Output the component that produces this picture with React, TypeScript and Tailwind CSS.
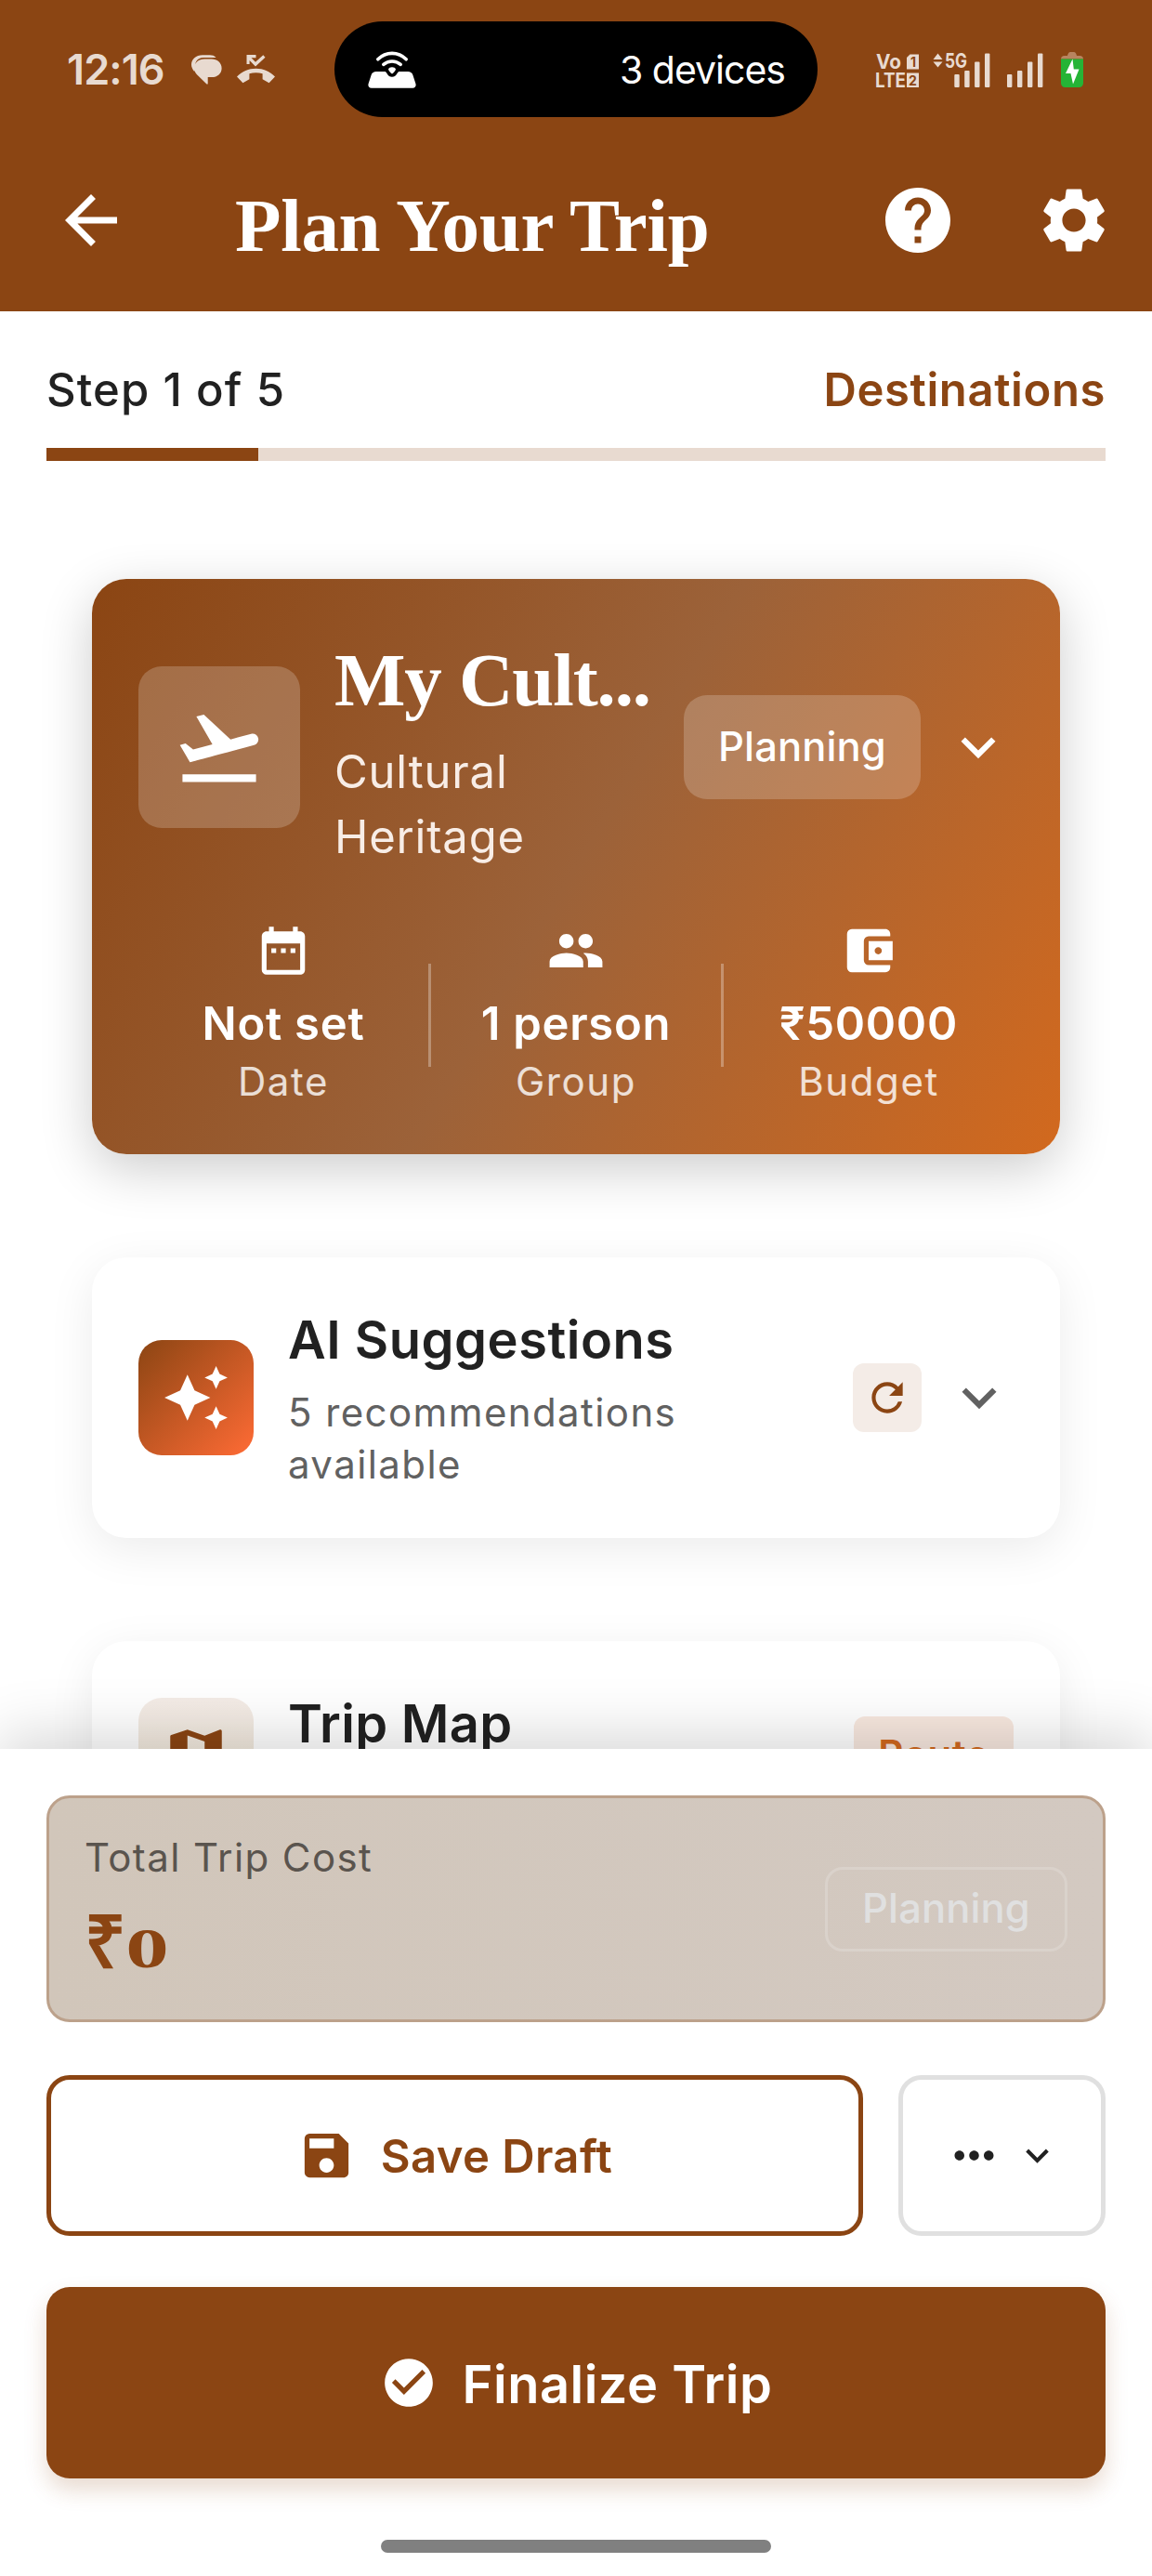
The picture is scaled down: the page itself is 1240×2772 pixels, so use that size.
import type { ReactNode } from "react";
import {
  MdAccountBalanceWallet,
  MdArrowBack,
  MdAutoAwesome,
  MdCheckCircle,
  MdDateRange,
  MdFlightTakeoff,
  MdHelp,
  MdKeyboardArrowDown,
  MdMap,
  MdMoreHoriz,
  MdPeople,
  MdRefresh,
  MdSave,
  MdSettings,
} from "react-icons/md";

function ChatBubbles() {
  return (
    <svg className="ml-[28px] h-[32px] w-[33px]" viewBox="0 0 33 32" fill="#E8DAD0">
      <path d="M4.6 14.5C2.8 8.6 6.4 2.9 13 2.9h13.6C24.8 1 22.6.3 20 .3h-8C5 .3 0 5 0 10.6c0 2.600 1.200 5.200 3.200 7.400z" />
      <path d="M14.200 4.600h7.400c6.300 0 11 4.200 11 9.800 0 5.600-4.600 9.700-10.600 9.700h-4.300V31.500h-1.200L6.200 21.600C4 19.400 3 17 3 14.300 3 8.600 7.800 4.600 14.200 4.600z" />
    </svg>
  );
}

function MissedCall() {
  return (
    <svg className="ml-[16px] h-[31px] w-[41px]" viewBox="0 0 41 31" fill="#E8DAD0">
      <path d="M10.500 0H20.500V3.200H15.500L20 7.800 28.300.3 30.500 2.800 20 12.600 13.600 6V10H10.500z" />
      <path d="M0 23.600C5.500 17.700 12.700 14.800 20.500 14.800S35.500 17.700 41 23.600L34.600 30.200 27.600 26.300V20.200C23 18.900 18 18.900 13.400 20.200V26.300L6.400 30.200z" />
    </svg>
  );
}

function Hotspot() {
  return (
    <svg className="h-[40px] w-[52px]" viewBox="0 0 52 40" fill="none">
      <path
        d="M9 22h9.500c1.800 0 2.600 5.800 7.500 5.800S31.700 22 33.500 22H43c2.500 0 4.600 1.300 5.400 3.700l3 9.300c.8 2.500-.6 4.700-3.200 4.700H3.800C1.200 39.700-.2 37.500.6 35l3-9.300C4.400 23.300 6.500 22 9 22z"
        fill="#fff"
      />
      <path d="M26 17.200c-2 0-3.400.8-4 2.200.6 2 2.200 3.800 4 5 1.800-1.200 3.400-3 4-5-.6-1.400-2-2.200-4-2.200z" fill="#fff" />
      <path d="M10.800 8.800C19.500.2 32.500.2 41.200 8.800M16.800 14.400c5.400-4.600 13-4.600 18.400 0" stroke="#fff" strokeWidth="3.600" strokeLinecap="round" />
    </svg>
  );
}

function NetworkStatus() {
  return (
    <svg
      className="ml-[63px] h-[40px] w-[224px] overflow-visible"
      viewBox="0 0 224 40"
      fill="#E8DAD0"
      fontFamily="Inter, sans-serif"
    >
      <text x="0" y="19" fontSize="21" fontWeight="700" textLength="27" lengthAdjust="spacingAndGlyphs">Vo</text>
      <text x="-1" y="38.500" fontSize="21" fontWeight="700" textLength="33" lengthAdjust="spacingAndGlyphs">LTE</text>
      <path d="M36.500 3.500H46V19.500H33V7z" />
      <path d="M33 23.500H46V39H33z" />
      <text x="37" y="16.500" fontSize="14" fontWeight="700" fill="#8B4513">1</text>
      <text x="35" y="36.500" fontSize="14" fontWeight="700" fill="#8B4513">2</text>
      <path d="M61.500 9 66.500 2.500 71.500 9zM61.500 11.500H71.500L66.500 17.500z" />
      <text x="74" y="17.500" fontSize="21.500" fontWeight="700" textLength="24" lengthAdjust="spacingAndGlyphs">5G</text>
      <rect x="84.300" y="25" width="5.400" height="14" rx="1" />
      <rect x="95.200" y="21" width="5.400" height="18" rx="1" />
      <rect x="106.100" y="11.500" width="5.400" height="27.500" rx="1" />
      <rect x="117" y="2.500" width="5.400" height="36.500" rx="1" />
      <rect x="141" y="25" width="5.400" height="14" rx="1" />
      <rect x="152" y="21" width="5.400" height="18" rx="1" />
      <rect x="163" y="11.500" width="5.400" height="27.500" rx="1" />
      <rect x="174" y="2.500" width="5.400" height="36.500" rx="1" />
      <path d="M199 8.500c0-2 1.500-3.500 3.500-3.500H206c.6-2.600 1.600-4 3-4h4c1.400 0 2.400 1.400 3 4h3.500c2 0 3.500 1.500 3.500 3.500z" fill="#B8845F" />
      <path d="M199 8.500H223V34.500c0 2.500-2 4.500-4.500 4.500h-15c-2.500 0-4.500-2-4.500-4.500z" fill="#25B436" />
      <path d="M211.500 8.500 204 24H209.500L212 35.500 218.500 19.500H212.800z" fill="#fff" />
    </svg>
  );
}

function Stat({ icon, value, label }: { icon: ReactNode; value: string; label: string }) {
  return (
    <div className="flex flex-1 flex-col items-center text-[62px] text-white">
      {icon}
      <span className="mt-[13px] text-[49px] leading-[70px] font-semibold tracking-[0.7px]">{value}</span>
      <span className="-mt-px text-[42px] leading-[56px] tracking-[1.6px] text-white/80">{label}</span>
    </div>
  );
}

function Header() {
  return (
    <header className="h-[335px] bg-[#8B4513]">
      <div className="flex h-[149px] items-center pl-[72px]">
        <span className="w-[106px] text-[45px] leading-[60px] font-semibold tracking-[-0.9px] whitespace-nowrap text-[#E8DAD0]">
          12:16
        </span>
        <ChatBubbles />
        <MissedCall />
        <div className="ml-[64px] flex h-[103px] w-[520px] items-center justify-between rounded-full bg-black pr-[35px] pl-[36px]">
          <Hotspot />
          <span className="text-[41px] leading-[60px] tracking-[-1px] whitespace-nowrap text-white">3 devices</span>
        </div>
        <NetworkStatus />
      </div>
      <div className="flex h-[176px] items-center pr-[42px] pl-[56px] text-[84px] text-white">
        <MdArrowBack />
        <h1 className="mt-[11px] ml-[113px] flex-1 font-['Liberation_Serif',serif] text-[81px] leading-[100px] font-bold tracking-[-0.300px] whitespace-nowrap">
          Plan Your Trip
        </h1>
        <MdHelp />
        <MdSettings className="ml-[84px]" />
      </div>
    </header>
  );
}

function Progress() {
  return (
    <section className="px-[50px] pt-[50px]">
      <div className="flex justify-between text-[49px] leading-[70px] text-[#212121]">
        <span className="font-medium tracking-[1.100px]">Step 1 of 5</span>
        <span className="font-semibold tracking-[0.600px] text-[#8B4513]">Destinations</span>
      </div>
      <div className="mt-[27px] h-[14px] bg-[#E8DAD0]">
        <div className="h-full w-1/5 bg-[#8B4513]" />
      </div>
    </section>
  );
}

function TripSummary() {
  return (
    <section className="mt-[127px] h-[619px] rounded-[37px] bg-[linear-gradient(120.740deg,#8B4513_0%,#9C6239_50%,#D2691E_100%)] p-[50px] shadow-[0_16px_56px_rgba(0,0,0,0.2)]">
      <div className="flex h-[262px] items-center text-white">
        <div className="flex size-[174px] items-center justify-center rounded-[25px] bg-white/20 text-[100px]">
          <MdFlightTakeoff />
        </div>
        <div className="ml-[37px] w-[376px]">
          <h2 className="font-['Liberation_Serif',serif] text-[81px] leading-[118px] font-bold tracking-[-1.100px] whitespace-nowrap">
            My Cult...
          </h2>
          <p className="mt-[5px] w-[260px] text-[49px] leading-[70px] tracking-[0.800px] text-[#F8EDE6]">Cultural Heritage</p>
        </div>
        <div className="flex h-[112px] w-[255px] items-center justify-center rounded-[25px] bg-white/20 text-[43.500px] font-medium tracking-[0.1px]">
          Planning
        </div>
        <MdKeyboardArrowDown className="ml-[25px] text-[74px]" />
      </div>
      <div className="mt-[57px] flex items-center">
        <Stat icon={<MdDateRange />} value="Not set" label="Date" />
        <div className="h-[111px] w-[3px] bg-white/30" />
        <Stat icon={<MdPeople />} value="1 person" label="Group" />
        <div className="h-[111px] w-[3px] bg-white/30" />
        <Stat icon={<MdAccountBalanceWallet />} value="₹50000" label="Budget" />
      </div>
    </section>
  );
}

function Suggestions() {
  return (
    <section className="mt-[111px] flex h-[302px] items-center rounded-[37px] bg-white p-[50px] shadow-[0_12px_50px_rgba(0,0,0,0.08)]">
      <div className="flex size-[124px] items-center justify-center rounded-[25px] bg-[linear-gradient(135deg,#8B4513,#FF6B35)] text-[74px] text-white">
        <MdAutoAwesome />
      </div>
      <div className="-mt-[2px] ml-[37px] flex-1">
        <h3 className="text-[56px] leading-[78px] font-semibold tracking-[0.5px] text-[#212121]">AI Suggestions</h3>
        <p className="mt-[11px] w-[480px] text-[42px] leading-[56px] tracking-[1.4px] text-[#616161]">
          5 recommendations available
        </p>
      </div>
      <div className="flex size-[74px] items-center justify-center rounded-[12px] bg-[#F4ECE7] text-[50px] text-[#8B4513]">
        <MdRefresh />
      </div>
      <MdKeyboardArrowDown className="ml-[25px] text-[74px] text-[#616161]" />
    </section>
  );
}

function TripMap() {
  return (
    <section className="mt-[111px] flex h-[246px] items-start rounded-[37px] bg-white p-[50px] shadow-[0_12px_50px_rgba(0,0,0,0.08)]">
      <div className="mt-[11px] flex size-[124px] items-center justify-center rounded-[25px] bg-linear-to-b from-[#F4ECE7] to-[#EFE6D2] text-[74px] text-[#8B4513]">
        <MdMap />
      </div>
      <h3 className="ml-[37px] flex-1 text-[56px] leading-[78px] font-semibold tracking-[0.3px] text-[#212121]">
        Trip Map
      </h3>
      <div className="mt-[31px] flex h-[81px] w-[172px] items-center justify-center rounded-[12px] bg-[#F8E8DF] text-[42px] font-semibold tracking-[0.4px] text-[#D2691E]">
        Route
      </div>
    </section>
  );
}

function ActionSheet() {
  return (
    <footer className="relative h-[890px] bg-white px-[50px] pt-[50px] shadow-[0_-14px_60px_rgba(0,0,0,0.16)]">
      <div className="flex h-[244px] items-center justify-between rounded-[25px] border-[3px] border-[#BCA18B] bg-[linear-gradient(90deg,#D1C6BA,#D3C9C1)] px-[38px]">
        <div>
          <p className="text-[42px] leading-[52px] tracking-[1.4px] text-[#5A544E]">Total Trip Cost</p>
          <p className="mt-[21px] flex font-['Liberation_Serif',serif] text-[78px] leading-[90px] font-bold text-[#8B4513]">
            <span>₹</span>
            <span className="ml-[7px] inline-block translate-y-[5px] scale-x-150 text-[62px]">0</span>
          </p>
        </div>
        <div className="flex h-[91px] w-[261px] items-center justify-center rounded-[19px] border-[3px] border-[#DAD2CB] text-[43.500px] font-medium tracking-[0.1px] text-[#E0E0E0]">
          Planning
        </div>
      </div>
      <div className="mt-[57px] flex gap-[38px]">
        <button className="flex h-[173px] w-[879px] items-center justify-center gap-[27px] rounded-[25px] border-[5px] border-[#8B4513] text-[49px] font-semibold tracking-[0.4px] text-[#8B4513]">
          <MdSave className="text-[63px]" />
          <span className="mt-[3px]">Save Draft</span>
        </button>
        <button className="flex h-[173px] w-[223px] items-center justify-center gap-[12px] rounded-[25px] border-[5px] border-[#E0E0E0] text-[#212121]">
          <MdMoreHoriz className="text-[63px]" />
          <MdKeyboardArrowDown className="text-[49px]" />
        </button>
      </div>
      <button className="mt-[55px] flex h-[206px] w-full items-center justify-center gap-[27px] rounded-[25px] bg-[#8B4513] text-[56px] font-semibold tracking-[0.5px] text-white shadow-[0_12px_25px_rgba(139,69,19,0.2)]">
        <MdCheckCircle className="text-[62px]" />
        <span className="mt-[4px]">Finalize Trip</span>
      </button>
      <div className="mx-auto mt-[66px] h-[14px] w-[420px] rounded-full bg-[#808080]" />
    </footer>
  );
}

export default function App() {
  return (
    <div className="h-[2772px] w-[1240px] overflow-hidden bg-white font-['Inter',sans-serif]">
      <Header />
      <main className="h-[1547px] overflow-hidden">
        <Progress />
        <div className="px-[99px]">
          <TripSummary />
          <Suggestions />
          <TripMap />
        </div>
      </main>
      <ActionSheet />
    </div>
  );
}
